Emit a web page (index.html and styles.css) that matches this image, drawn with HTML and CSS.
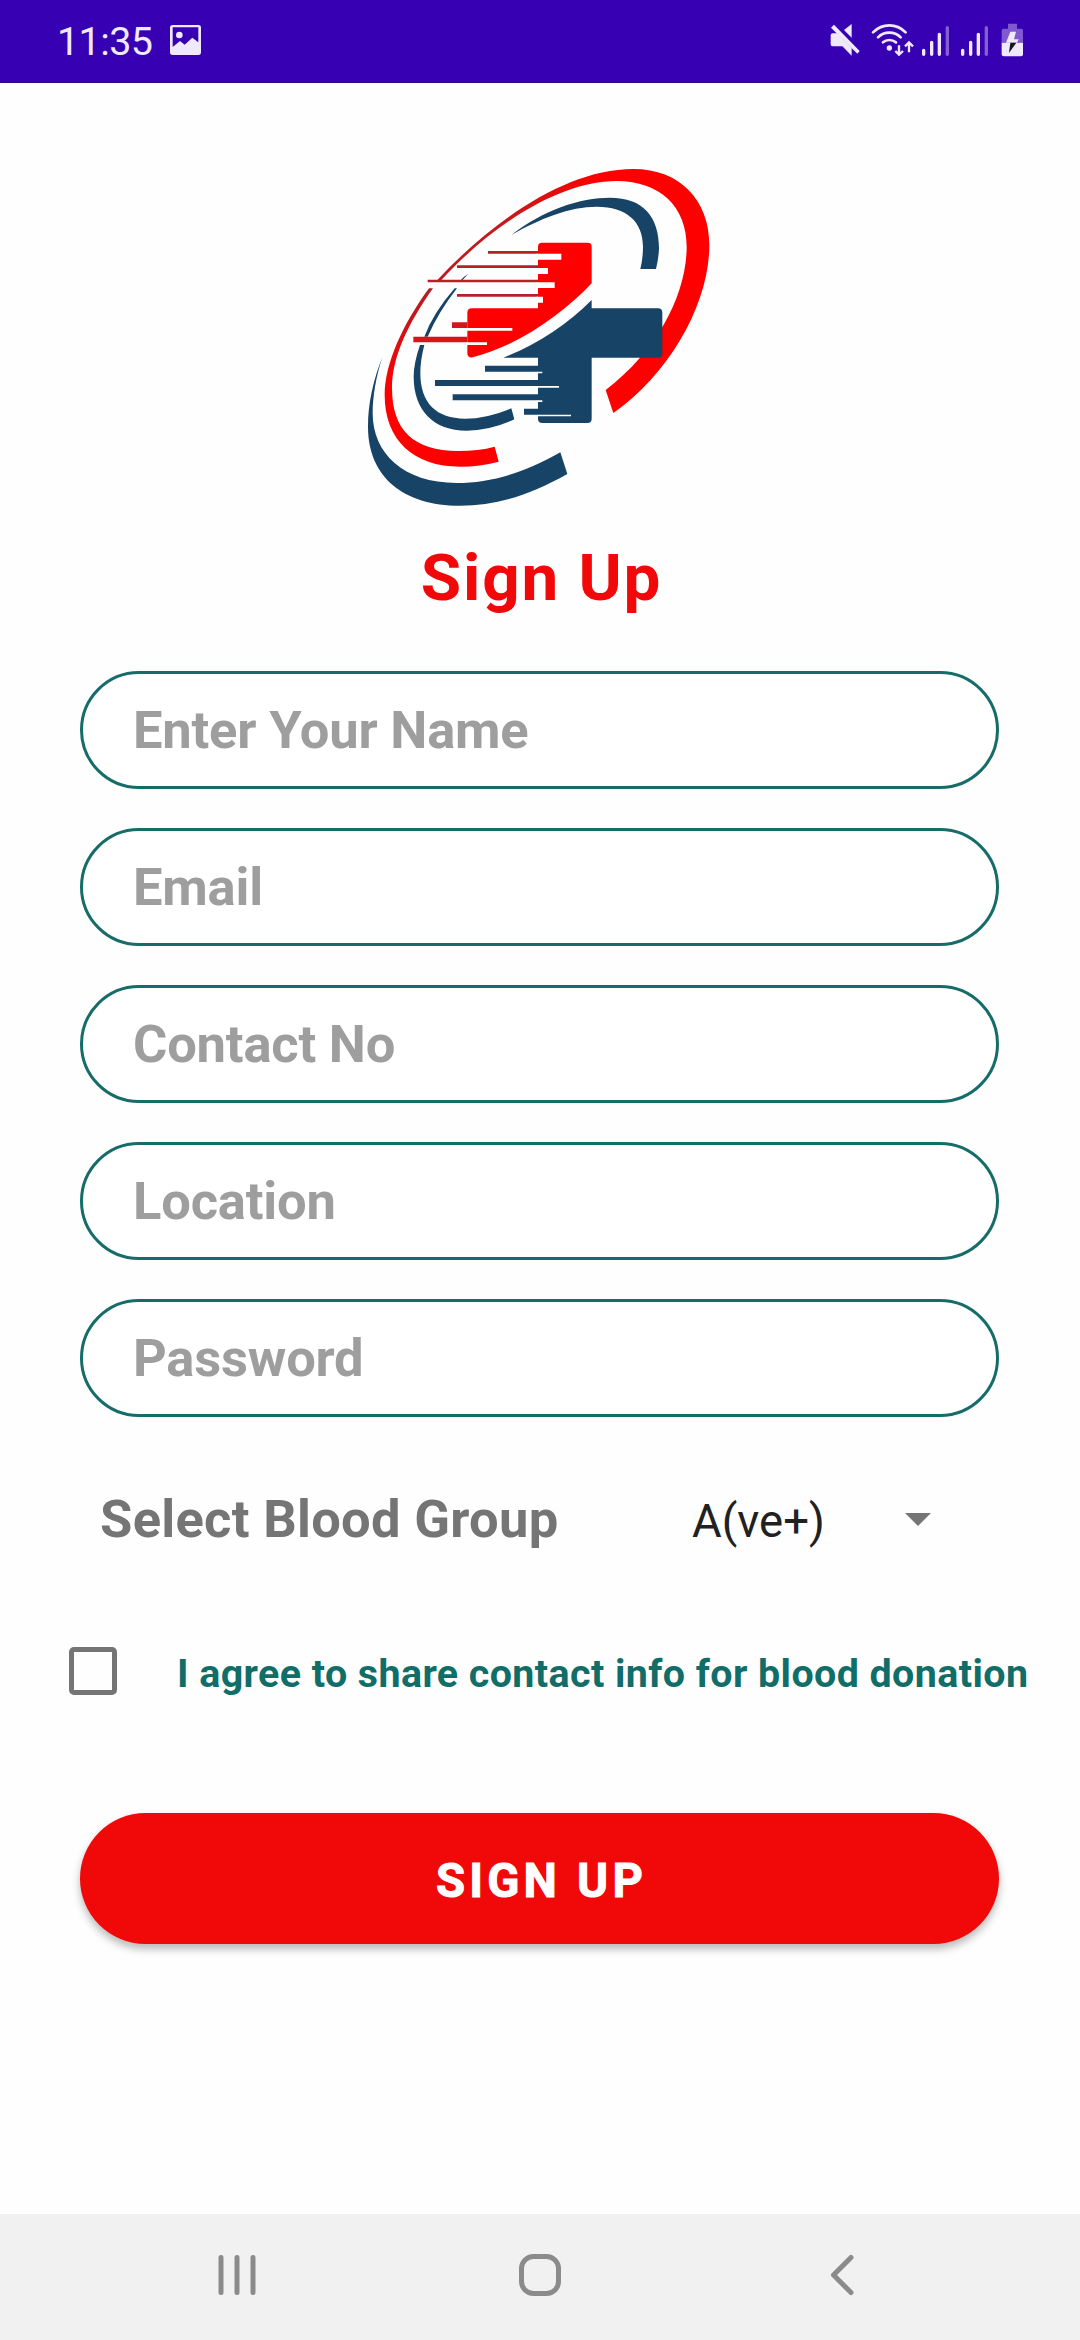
FILE: index.html
```html
<!DOCTYPE html>
<html lang="en">
<head>
<meta charset="utf-8">
<title>Sign Up</title>
<link rel="stylesheet" href="styles.css">
</head>
<body>
<div class="screen">
  <header class="status">
    <span class="time">11:35</span>
    <svg class="picture" width="31" height="30" viewBox="0 0 93 90"><path fill="#efe9fb" fill-rule="evenodd" d="M8 0H85Q93 0 93 8V82Q93 90 85 90H8Q0 90 0 82V8Q0 0 8 0ZM8 7V66L30 48L44 59L67 38L85 52V7Z"/><circle cx="28" cy="30" r="10" fill="#efe9fb"/></svg>
    <div class="status-icons">
      <svg class="mute" width="30" height="34" viewBox="90 70 90 102"><g fill="#efe9fb"><path d="M98 101H112L155 145V168L127 140H98Q92 140 92 134V107Q92 101 98 101ZM155 73V114L132 91Z"/><path d="M102 75L179 154L172 162L93 84Z"/></g></svg>
      <svg class="wifi" width="43" height="34" viewBox="213 70 129 102"><g fill="none" stroke="#efe9fb" stroke-width="8" stroke-linecap="round"><path d="M219 98Q240 77 268 77T317 98M234 113Q248 99 268 99T302 113M249 128Q257 121 268 121T288 128"/><path stroke-width="7" stroke-linecap="butt" d="M297 137V164M286 154L297 165L309 154M327 158V130M315 140L327 128L339 140"/></g><circle cx="268" cy="145" r="8" fill="#efe9fb"/></svg>
      <svg class="signal" width="29" height="34" viewBox="363 70 87 102"><g stroke="#efe9fb" stroke-width="10" stroke-linecap="round"><path d="M371 152V164M395 128V164M418 104V164"/><path stroke="#8360d0" d="M442 84V164"/></g></svg>
      <svg class="signal second" width="29" height="34" viewBox="363 70 87 102"><g stroke="#efe9fb" stroke-width="10" stroke-linecap="round"><path d="M371 152V164M395 128V164M418 104V164"/><path stroke="#8360d0" d="M442 84V164"/></g></svg>
      <svg class="battery" width="23" height="34" viewBox="603 70 69 102"><path fill="#8058cf" d="M624 72H651V87H663Q669 87 669 93V129H605V93Q605 87 611 87H624Z"/><path fill="#efe9fb" d="M605 129H669V164Q669 170 663 170H611Q605 170 605 164Z"/><path fill="#efe9fb" d="M631 96H648L642 119H656L651 129H618Z"/><path fill="#17161c" d="M631 129H649L627 160Z"/></svg>
    </div>
  </header>

  <main class="form">
    <svg class="logo" width="380" height="370" viewBox="0 0 1140 1110">
      <defs>
        <linearGradient id="sweep" gradientUnits="userSpaceOnUse" x1="260" y1="0" x2="740" y2="0"><stop offset="0" stop-color="#b81c20"/><stop offset=".5" stop-color="#cb1719"/><stop offset="1" stop-color="#fe0000"/></linearGradient>
        <linearGradient id="tail" gradientUnits="userSpaceOnUse" x1="0" y1="415" x2="0" y2="720"><stop offset="0" stop-color="#b02024"/><stop offset="1" stop-color="#fe0000"/></linearGradient>
      </defs>
      <path fill="url(#sweep)" d="M790 789C960 670 1078 460 1078 285C1078 150 990 57 850 57C650 57 430 210 260 392H272C440 210 640 93 800 93C930 93 1010 170 1010 290C1010 430 925 600 767 720Z"/>
      <path fill="url(#tail)" d="M237 415C160 520 104 640 104 735C104 870 190 950 330 950Q390 950 446 935L434 890Q385 903 325 903C190 903 126 840 126 715C126 620 175 520 249 415Z"/>
      <g fill="#174367">
        <path d="M484 255C580 180 690 143 780 143C880 143 927 200 927 295Q926 325 918 357H871Q879 325 879 290C879 215 830 170 740 170C660 170 570 205 484 255Z"/>
        <path d="M355 371Q343 378 332 391H337ZM314 415Q249 490 223 560H233Q266 485 321 415ZM210 585Q191 640 191 680C191 780 250 842 350 842Q420 842 493 808L484 775Q410 806 345 806C260 806 211 760 211 670Q211 630 223 585Z"/>
        <path d="M97 622C70 690 54 760 54 830C54 980 160 1067 330 1067C440 1067 540 1035 652 972L631 907C520 970 420 999 320 999C160 999 68 910 68 790C68 740 78 680 97 622Z"/>
        <path d="M725 450V475H924Q937 475 937 488V611Q937 623 924 623H725V806Q725 819 712 819H577Q564 819 564 806V623H460C560 585 650 525 725 450Z"/>
        <path d="M405 647H565V665H405ZM255 690H565V708H255ZM308 733H565V751H308ZM522 776H565V794H522Z"/>
      </g>
      <path fill="#fe0000" d="M576 278H713Q725 278 725 290V400C640 490 510 585 368 622Q352 624 352 608V488Q352 475 366 475H564V290Q564 278 576 278Z"/>
      <path fill="#b91f26" d="M414 303H564V311H414ZM321 346H564V354H321ZM233 389H564V397H233ZM321 432H564V440H321Z"/>
      <path fill="#d5141b" d="M306 517H352V534H306ZM190 560H352V577H190Z"/>
      <path fill="#fff" d="M560 311H634V329H560ZM560 354H594V372H560ZM560 397H614V414H560ZM560 440H579V458H560ZM350 534H487V542H350ZM350 577H411V585H350ZM562 665H577V670H562ZM562 708H627V713H562ZM562 751H577V756H562ZM562 794H663V799H562Z"/>
    </svg>

    <h1 class="title">Sign Up</h1>

    <div class="fields">
      <div class="field">Enter Your Name</div>
      <div class="field">Email</div>
      <div class="field">Contact No</div>
      <div class="field">Location</div>
      <div class="field">Password</div>
    </div>

    <div class="group">
      <span class="group-label">Select Blood Group</span>
      <span class="group-value">A(ve+)</span>
      <svg class="arrow" width="26" height="13" viewBox="0 0 26 13"><path fill="#757575" d="M0 0H26L13 13Z"/></svg>
    </div>

    <div class="agree">
      <span class="box"></span>
      <span class="agree-text">I agree to share contact info for blood donation</span>
    </div>

    <button class="submit" type="button">SIGN UP</button>
  </main>

  <nav class="navbar">
    <svg width="38" height="42" viewBox="0 0 38 42"><path fill="none" stroke="#8b8b8b" stroke-width="5" stroke-linecap="round" d="M3 3.500V38.500M19 3.500V38.500M35 3.500V38.500"/></svg>
    <svg class="home" width="42" height="42" viewBox="0 0 42 42"><rect x="2.500" y="2.500" width="37" height="37" rx="12" fill="none" stroke="#8b8b8b" stroke-width="5"/></svg>
    <svg width="24" height="42" viewBox="0 0 24 42"><path fill="none" stroke="#8b8b8b" stroke-width="5" stroke-linecap="round" stroke-linejoin="round" d="M21 3.500L3.500 21L21 38.500"/></svg>
  </nav>
</div>
</body>
</html>
```
FILE: styles.css
```css
* { box-sizing: border-box; }
body { margin: 0; background: #fff; font-family: Roboto, sans-serif; }
svg { display: block; flex: none; }

.screen { width: 1080px; height: 2340px; display: flex; flex-direction: column; background: #fefefe; overflow: hidden; }

.status { height: 83px; flex: none; display: flex; align-items: flex-start; padding: 0 56px 0 57px; background: #3700b3; border-bottom: 1px solid #2c0a80; color: #efe9fb; }
.time { width: 113px; margin-top: 18px; font-size: 39.5px; line-height: 48px; letter-spacing: -.6px; white-space: nowrap; }
.picture { margin-top: 25px; }
.status-icons { display: flex; margin: 23px 0 0 auto; }
.wifi { margin-left: 11px; }
.signal { margin-left: 7px; }
.signal.second { margin-left: 10px; }
.battery { margin-left: 12px; }

.form { flex: 1; padding: 67px 81px 0 80px; display: flex; flex-direction: column; }
.logo { margin-left: 270px; }
.title { margin: 19px 0 54px; padding-left: 4px; font-size: 65.6px; line-height: 78px; font-weight: 700; letter-spacing: 1.9px; text-align: center; color: #f10808; }

.fields { display: flex; flex-direction: column; gap: 39px; }
.field { height: 118px; padding: 0 50px; border: 3px solid #156c68; border-radius: 59px; font-size: 52.5px; line-height: 112px; font-weight: 700; letter-spacing: -.2px; color: #9e9e9e; background: #fff; }

.group { height: 60px; margin-top: 72px; padding-left: 20px; display: flex; align-items: baseline; line-height: 60px; white-space: nowrap; }
.group-label { width: 592px; font-size: 52.5px; font-weight: 700; letter-spacing: .3px; color: #757575; }
.group-value { width: 213px; font-size: 45.5px; color: #212121; }
.arrow { align-self: flex-start; margin-top: 24px; }

.agree { height: 52px; margin: 98px -60px 0 -11px; display: flex; align-items: flex-start; gap: 60px; }
.box { width: 48px; height: 48px; flex: none; border: 5px solid #757575; border-radius: 5px; }
.agree-text { padding-top: 1px; font-size: 39.4px; line-height: 52px; font-weight: 700; letter-spacing: .42px; color: #116d68; white-space: nowrap; }

.submit { height: 131px; flex: none; margin-top: 114px; padding: 5px 0 0 4px; border: 0; border-radius: 66px; background: #f10808; color: #fff; font: 700 47.25px/56px Roboto, sans-serif; letter-spacing: 4.2px; -webkit-text-stroke: 1px #fff; box-shadow: 0 5px 8px rgba(0, 0, 0, .28); }

.navbar { height: 126px; flex: none; display: flex; align-items: center; justify-content: space-between; padding: 0 226px 4px 218px; background: #f1f1f1; }
.home { margin-right: 6px; }
```
